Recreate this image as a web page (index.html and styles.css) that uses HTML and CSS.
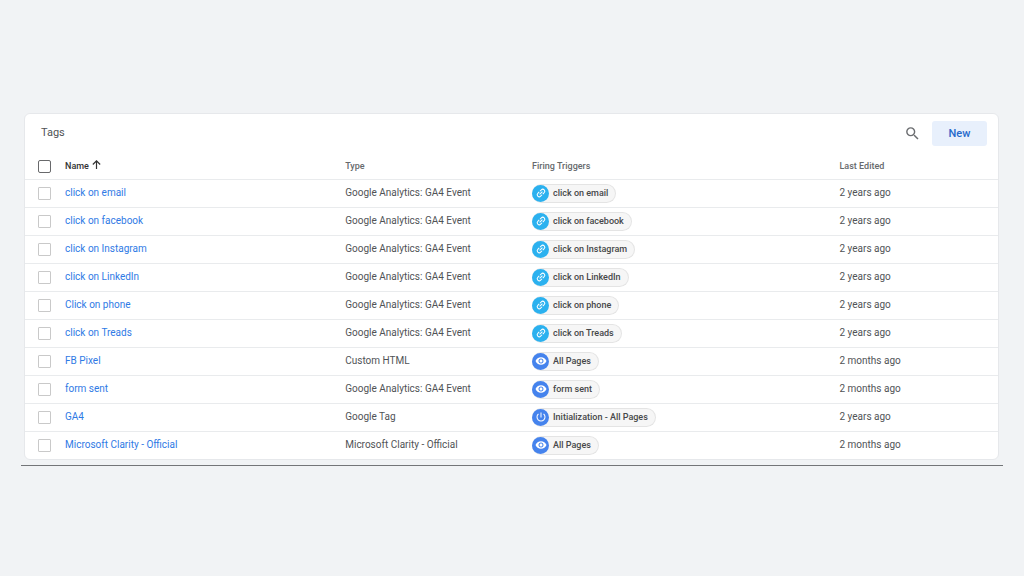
FILE: index.html
```
<!DOCTYPE html>
<html lang="en">
<head>
    <meta charset="UTF-8">
    <meta name="viewport" content="width=device-width, initial-scale=1.0">
    <title>Tags</title>
    <link rel="stylesheet" href="styles.css">
</head>
<body>
    <!-- Shared icons -->
    <svg class="sprite" aria-hidden="true">
        <symbol id="icon-link" viewBox="0 0 24 24">
            <g transform="rotate(-45 12 12)" fill="none" stroke="currentColor" stroke-width="2">
                <path d="M11 8H7a4 4 0 0 0 0 8h4M13 8h4a4 4 0 0 1 0 8h-4M8 12h8"/>
            </g>
        </symbol>
        <symbol id="icon-eye" viewBox="0 0 24 24">
            <path fill="currentColor" d="M12 4.5C7 4.5 2.73 7.61 1 12c1.73 4.39 6 7.5 11 7.5s9.27-3.11 11-7.5c-1.73-4.39-6-7.5-11-7.5zM12 17c-2.76 0-5-2.24-5-5s2.24-5 5-5 5 2.24 5 5-2.24 5-5 5zm0-8c-1.66 0-3 1.34-3 3s1.34 3 3 3 3-1.34 3-3-1.34-3-3-3z"/>
        </symbol>
        <symbol id="icon-power" viewBox="0 0 24 24">
            <path fill="currentColor" d="M13 3h-2v10h2V3zm4.83 2.17l-1.42 1.42A6.92 6.92 0 0 1 19 12c0 3.87-3.13 7-7 7A6.995 6.995 0 0 1 7.58 6.58L6.17 5.17A8.932 8.932 0 0 0 3 12a9 9 0 0 0 18 0c0-2.74-1.23-5.18-3.17-6.83z"/>
        </symbol>
    </svg>

    <main>
        <section class="card">
            <header class="card-header">
                <h1>Tags</h1>
                <button class="search-button" type="button" aria-label="Search">
                    <svg viewBox="0 0 24 24"><path fill="currentColor" d="M15.5 14h-.79l-.28-.27A6.471 6.471 0 0 0 16 9.5 6.5 6.5 0 1 0 9.5 16c1.61 0 3.09-.59 4.23-1.57l.27.28v.79l5 4.99L20.49 19l-4.99-5zm-6 0C7.01 14 5 11.99 5 9.5S7.01 5 9.5 5 14 7.01 14 9.5 11.99 14 9.5 14z"/></svg>
                </button>
                <button class="new-button" type="button">New</button>
            </header>

            <table class="tags">
                <thead>
                    <tr>
                        <th class="col-check"><input type="checkbox" class="check check-all" aria-label="Select all tags"></th>
                        <th class="col-name" aria-sort="ascending">Name <svg class="sort-icon" viewBox="0 0 12 12"><path d="M6 11V2M2 6l4-4 4 4" fill="none" stroke="currentColor" stroke-width="1.3"/></svg></th>
                        <th class="col-type">Type</th>
                        <th class="col-triggers">Firing Triggers</th>
                        <th>Last Edited</th>
                    </tr>
                </thead>
                <tbody>
                    <tr>
                        <td><input type="checkbox" class="check" aria-label="Select click on email"></td>
                        <td><a href="#">click on email</a></td>
                        <td>Google Analytics: GA4 Event</td>
                        <td><span class="chip"><span class="chip-icon link"><svg><use href="#icon-link"/></svg></span>click on email</span></td>
                        <td>2 years ago</td>
                    </tr>
                    <tr>
                        <td><input type="checkbox" class="check" aria-label="Select click on facebook"></td>
                        <td><a href="#">click on facebook</a></td>
                        <td>Google Analytics: GA4 Event</td>
                        <td><span class="chip"><span class="chip-icon link"><svg><use href="#icon-link"/></svg></span>click on facebook</span></td>
                        <td>2 years ago</td>
                    </tr>
                    <tr>
                        <td><input type="checkbox" class="check" aria-label="Select click on Instagram"></td>
                        <td><a href="#">click on Instagram</a></td>
                        <td>Google Analytics: GA4 Event</td>
                        <td><span class="chip"><span class="chip-icon link"><svg><use href="#icon-link"/></svg></span>click on Instagram</span></td>
                        <td>2 years ago</td>
                    </tr>
                    <tr>
                        <td><input type="checkbox" class="check" aria-label="Select click on LinkedIn"></td>
                        <td><a href="#">click on LinkedIn</a></td>
                        <td>Google Analytics: GA4 Event</td>
                        <td><span class="chip"><span class="chip-icon link"><svg><use href="#icon-link"/></svg></span>click on LinkedIn</span></td>
                        <td>2 years ago</td>
                    </tr>
                    <tr>
                        <td><input type="checkbox" class="check" aria-label="Select Click on phone"></td>
                        <td><a href="#">Click on phone</a></td>
                        <td>Google Analytics: GA4 Event</td>
                        <td><span class="chip"><span class="chip-icon link"><svg><use href="#icon-link"/></svg></span>click on phone</span></td>
                        <td>2 years ago</td>
                    </tr>
                    <tr>
                        <td><input type="checkbox" class="check" aria-label="Select click on Treads"></td>
                        <td><a href="#">click on Treads</a></td>
                        <td>Google Analytics: GA4 Event</td>
                        <td><span class="chip"><span class="chip-icon link"><svg><use href="#icon-link"/></svg></span>click on Treads</span></td>
                        <td>2 years ago</td>
                    </tr>
                    <tr>
                        <td><input type="checkbox" class="check" aria-label="Select FB Pixel"></td>
                        <td><a href="#">FB Pixel</a></td>
                        <td>Custom HTML</td>
                        <td><span class="chip"><span class="chip-icon"><svg><use href="#icon-eye"/></svg></span>All Pages</span></td>
                        <td>2 months ago</td>
                    </tr>
                    <tr>
                        <td><input type="checkbox" class="check" aria-label="Select form sent"></td>
                        <td><a href="#">form sent</a></td>
                        <td>Google Analytics: GA4 Event</td>
                        <td><span class="chip"><span class="chip-icon"><svg><use href="#icon-eye"/></svg></span>form sent</span></td>
                        <td>2 months ago</td>
                    </tr>
                    <tr>
                        <td><input type="checkbox" class="check" aria-label="Select GA4"></td>
                        <td><a href="#">GA4</a></td>
                        <td>Google Tag</td>
                        <td><span class="chip"><span class="chip-icon"><svg><use href="#icon-power"/></svg></span>Initialization - All Pages</span></td>
                        <td>2 years ago</td>
                    </tr>
                    <tr>
                        <td><input type="checkbox" class="check" aria-label="Select Microsoft Clarity - Official"></td>
                        <td><a href="#">Microsoft Clarity - Official</a></td>
                        <td>Microsoft Clarity - Official</td>
                        <td><span class="chip"><span class="chip-icon"><svg><use href="#icon-eye"/></svg></span>All Pages</span></td>
                        <td>2 months ago</td>
                    </tr>
                </tbody>
            </table>
        </section>
        <hr>
    </main>
</body>
</html>
```
FILE: styles.css
```
* {
    box-sizing: border-box;
}

body {
    margin: 0;
    min-height: 100vh;
    background-color: #f1f3f5;
    color: #505356;
    font-family: Roboto, "Liberation Sans", sans-serif;
    font-size: 10px;
    line-height: 16px;
}

.sprite {
    display: none;
}

main {
    padding: 113px 21px 24px;
}

/* Card */
.card {
    margin: 0 4px 0 3px;
    background-color: #fff;
    border: 1px solid #e6e8eb;
    border-radius: 6px;
}

.card-header {
    display: flex;
    align-items: center;
    height: 38px;
    padding: 0 11px 0 16px;
}

.card-header h1 {
    flex: 1;
    margin: 0;
    font-size: 11px;
    font-weight: 400;
}

.search-button {
    display: flex;
    margin-right: 11px;
    padding: 0;
    border: none;
    background: none;
    color: #6b6d70;
    cursor: pointer;
}

.search-button svg {
    width: 17px;
    height: 17px;
}

.new-button {
    width: 55px;
    height: 25px;
    padding: 0;
    border: none;
    border-radius: 3px;
    background-color: #e8f0fc;
    color: #2669cb;
    font-family: inherit;
    font-size: 11px;
    font-weight: 500;
    cursor: pointer;
}

/* Tags table */
.tags {
    width: 100%;
    table-layout: fixed;
    border-collapse: collapse;
}

.tags th,
.tags td {
    height: 28px;
    padding: 0;
    text-align: left;
    vertical-align: middle;
    white-space: nowrap;
}

.tags td {
    border-top: 1px solid #e9ebed;
}

.tags th {
    height: 27px;
    padding-top: 2px;
    color: #66696c;
    font-size: 9px;
    font-weight: 500;
}

.tags th:first-child,
.tags td:first-child {
    padding-left: 13px;
}

.tags .col-check {
    width: 40px;
}

.tags .col-name {
    width: 28.8%;
    color: #333;
}

.tags .col-type {
    width: 19.2%;
}

.tags .col-triggers {
    width: 31.6%;
}

.sort-icon {
    width: 11px;
    height: 11px;
    vertical-align: -1px;
}

.tags a {
    color: #2f7ae5;
    text-decoration: none;
}

.check {
    display: block;
    width: 13px;
    height: 13px;
    margin: 0;
    appearance: none;
    border: 1px solid #c9c9c9;
    border-radius: 1px;
    background-color: #fff;
}

.check:checked {
    background-color: #2b75dc;
}

.check-all {
    border-color: #68696b;
    border-radius: 2px;
}

/* Trigger chips */
.chip {
    display: inline-flex;
    align-items: center;
    gap: 4px;
    height: 19px;
    padding-right: 7px;
    border: 1px solid #e4e4e4;
    border-left: none;
    border-radius: 10px;
    background-color: #f6f6f6;
    color: #46484a;
    font-size: 9px;
    font-weight: 500;
    vertical-align: middle;
}

.chip-icon {
    display: flex;
    align-items: center;
    justify-content: center;
    width: 17px;
    height: 17px;
    border-radius: 50%;
    background-color: #4583ed;
    color: #fff;
}

.chip-icon.link {
    background-color: #2bb1ef;
}

.chip-icon svg {
    width: 12px;
    height: 12px;
}

hr {
    height: 1px;
    margin: 5px 0 0;
    border: none;
    background-color: #737578;
}
```
